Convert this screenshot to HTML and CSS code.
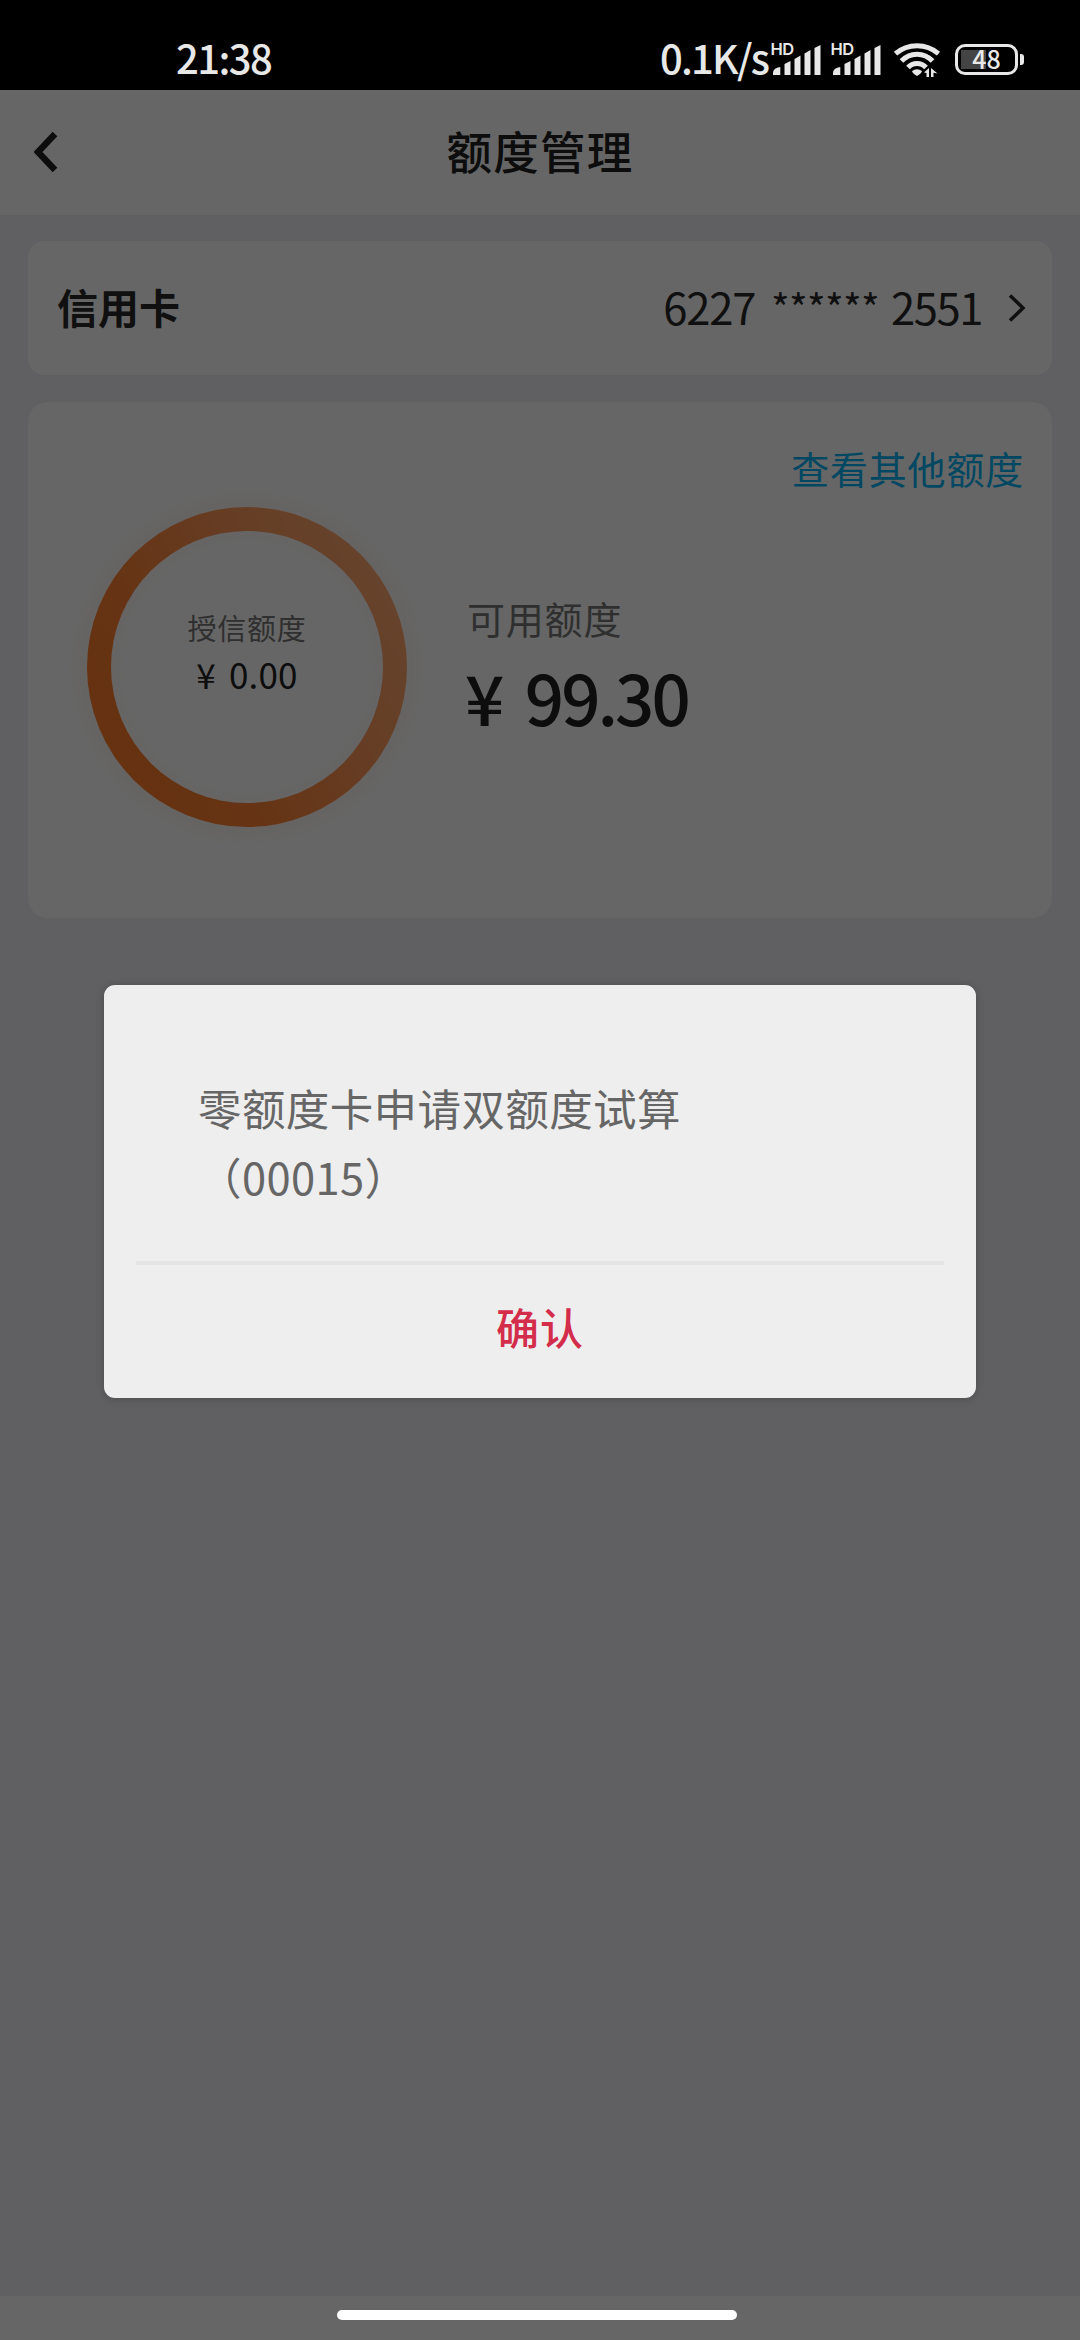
FILE: index.html
```html
<!DOCTYPE html>
<html lang="zh-CN">
<head>
<meta charset="utf-8">
<title>额度管理</title>
<link rel="stylesheet" href="styles.css">
</head>
<body>
<div class="screen">
  <div class="status">
    <span class="time">21:38</span>
    <div class="indicators">
      <span class="speed">0.1K/s</span>
      <svg class="signal" viewBox="0 0 52 34">
        <text x="0.500" y="13.300">HD</text>
        <path d="M3 33V31Q3 26 10.3 25V33ZM14.5 33V22L20.5 19V33ZM24.5 33V17L30.5 13.5V33ZM34.5 33V11.5L40.500 8V33ZM44.500 33V6L50.500 3V33Z"/>
      </svg>
      <svg class="signal signal-second" viewBox="0 0 52 34">
        <text x="0.500" y="13.300">HD</text>
        <path d="M3 33V31Q3 26 10.3 25V33ZM14.5 33V22L20.5 19V33ZM24.5 33V17L30.5 13.5V33ZM34.5 33V11.5L40.500 8V33ZM44.500 33V6L50.500 3V33Z"/>
      </svg>
      <svg class="wifi" viewBox="0 0 48 36">
        <g class="arcs">
          <path d="M2.500 11.700A33 33 0 0 1 45.500 11.700"/>
          <path d="M8.500 19A21 21 0 0 1 39.500 19"/>
          <path d="M15 25.500A12 12 0 0 1 33 25.500"/>
        </g>
        <path d="M19 29Q24 25.500 29 29Q28.500 31.500 24 34Q19.500 31.500 19 29ZM36 26V35H33.500V31L31 30.500ZM38 35V26L44.500 31.500L40.500 30.800V35Z"/>
      </svg>
      <div class="battery"><span class="battery-body"><span class="battery-text">48</span></span><span class="battery-tip"></span></div>
    </div>
  </div>

  <header class="nav">
    <svg class="back" viewBox="0 0 24 42"><path d="M21 3L4 21L21 39"/></svg>
    <h1 class="title">额度管理</h1>
  </header>

  <main class="content">
    <section class="card card-row">
      <span class="card-label">信用卡</span>
      <div class="card-number"><span class="digits">6227</span><span class="mask">******</span><span class="digits digits-last">2551</span></div>
      <svg class="more" viewBox="0 0 18 30"><path d="M2 2.500L15 15L2 27.500"/></svg>
    </section>

    <section class="card quota">
      <a class="other">查看其他额度</a>
      <div class="quota-body">
        <div class="ring">
          <div class="ring-inner">
            <span class="ring-label">授信额度</span>
            <span class="ring-value">¥ 0.00</span>
          </div>
        </div>
        <div class="available">
          <span class="available-label">可用额度</span>
          <span class="available-value">¥ 99.30</span>
        </div>
      </div>
    </section>
  </main>
  <footer class="home"></footer>

  <div class="overlay">
    <div class="dialog">
      <p class="message">零额度卡申请双额度试算<br>（00015）</p>
      <button class="confirm">确认</button>
    </div>
    <div class="home-pill"></div>
  </div>
</div>
</body>
</html>
```
FILE: styles.css
```css
* { box-sizing: border-box; }
body { margin: 0; background: #000; font-family: "Noto Sans CJK SC", "Noto Sans", sans-serif; }
.screen { position: relative; width: 1080px; height: 2340px; overflow: hidden; display: flex; flex-direction: column; background: #f0f0f4; }

.status { flex: none; height: 90px; padding: 28px 56px 0 176px; display: flex; justify-content: space-between; background: #000; color: #e8e8e8; }
.time, .speed { height: 58px; line-height: 58px; font-size: 40px; font-weight: 500; white-space: nowrap; }
.time { letter-spacing: -1.6px; }
.indicators { display: flex; align-items: flex-start; }
.speed { width: 110px; letter-spacing: -1.8px; }
.indicators svg, .battery { margin-top: 14px; flex: none; }
.indicators svg { overflow: visible; }
.signal { width: 52px; height: 34px; fill: #e8e8e8; font-family: Inter, sans-serif; font-size: 16.5px; font-weight: 600; letter-spacing: -.5px; }
.signal-second { margin-left: 8px; }
.wifi { width: 48px; height: 36px; margin-left: 11px; fill: #e8e8e8; }
.arcs path { fill: none; stroke: #e8e8e8; stroke-width: 5px; }
.battery { display: flex; align-items: center; gap: 2px; height: 34px; margin-left: 14px; }
.battery-body { width: 63px; height: 31px; padding: 3px; border: 3px solid #e8e8e8; border-radius: 10px; display: grid; place-items: center; background: linear-gradient(90deg, #444 25px, transparent 25px) 3px 3px / 51px 19px no-repeat; }
.battery-text { line-height: 24px; margin-top: -4px; font-size: 25px; font-weight: 500; }
.battery-tip { width: 4px; height: 11px; border-radius: 0 3px 3px 0; background: #e8e8e8; }

.nav { flex: none; height: 125px; display: grid; grid-template-columns: 69px 1fr 69px; align-items: center; background: #fff; }
.back { width: 24px; height: 42px; margin: -2px 0 0 34px; fill: none; stroke: #222; stroke-width: 6.5px; }
.title { margin: -5px 0 0; text-align: center; font-size: 45.5px; font-weight: 500; line-height: 66px; letter-spacing: 1.3px; color: #222; }

.content { flex: 1; padding: 26px 28px; display: flex; flex-direction: column; gap: 27px; }
.card { background: #fff; }
.card-row { height: 134px; border-radius: 16px; padding: 0 26px 0 29px; display: flex; align-items: center; color: #282828; }
.card-label { flex: 1; font-size: 41px; font-weight: 700; line-height: 60px; margin-top: -4px; }
.card-number { display: flex; font-size: 43.5px; line-height: 64px; margin-top: -2px; white-space: nowrap; }
.digits { letter-spacing: -1.2px; }
.mask { margin: 0 12px 0 16px; font-size: 40px; letter-spacing: -.7px; }
.digits-last { letter-spacing: -1.4px; width: 91px; }
.more { width: 18px; height: 30px; margin-left: 26px; fill: none; stroke: #282828; stroke-width: 3.5px; }

.quota { height: 516px; border-radius: 20px; padding: 38px 28px 0 59px; display: flex; flex-direction: column; }
.other { align-self: flex-end; height: 56px; line-height: 56px; font-size: 38px; letter-spacing: .8px; color: #00b4f5; }
.quota-body { display: flex; margin-top: 11px; }
.ring { width: 320px; height: 320px; padding: 24px; border-radius: 50%; background: linear-gradient(60deg, #ff7c28 10%, #ff8334 35%, #ff9a5c 65%, #ffb07c 100%); box-shadow: 0 0 24px rgba(255, 140, 60, .12); }
.ring-inner { width: 272px; height: 272px; border-radius: 50%; background: #fff; box-shadow: inset 0 0 20px rgba(255, 140, 60, .06); display: flex; flex-direction: column; align-items: center; padding-top: 75px; }
.ring-label { height: 42px; line-height: 42px; font-size: 29px; letter-spacing: .8px; color: #777; }
.ring-value { height: 52px; line-height: 52px; font-size: 35px; color: #222; letter-spacing: .2px; word-spacing: 5px; }
.available { margin-left: 58px; padding-top: 83px; display: flex; flex-direction: column; }
.available-label { height: 56px; line-height: 56px; margin-left: 2px; font-size: 38px; letter-spacing: .8px; color: #777; }
.available-value { height: 100px; line-height: 100px; font-size: 69px; font-weight: 500; color: #222; letter-spacing: -3px; word-spacing: 11px; }
.home { flex: none; height: 44px; background: #fff; }

.overlay { position: absolute; inset: 90px 0 0; padding: 895px 104px 0; background: rgba(0, 0, 0, .6); display: flex; flex-direction: column; }
.dialog { height: 413px; border-radius: 11px; background: #eee; box-shadow: 0 1px 8px rgba(0, 0, 0, .2); padding: 88px 32px 0; }
.message { margin: 0; height: 188px; padding: 0 0 0 62px; font-size: 43.5px; line-height: 69px; letter-spacing: .4px; color: #666; }
.confirm { display: block; width: 808px; height: 130px; padding: 0 0 4px; border: 0; border-top: 4px solid #e4e4e4; background: none; font: 500 43px/118px "Noto Sans CJK SC", sans-serif; letter-spacing: 1px; color: #d42d4b; }
.home-pill { width: 400px; height: 10px; margin: auto 0 20px 233px; border-radius: 5px; background: #fff; }
```
